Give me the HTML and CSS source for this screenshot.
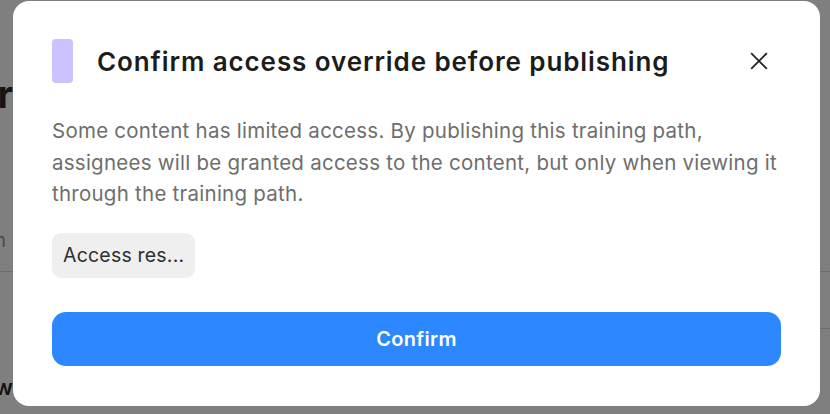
FILE: index.html
```html
<!DOCTYPE html>
<html lang="en">
  <head>
    <meta charset="UTF-8" />
    <meta name="viewport" content="width=device-width, initial-scale=1.0" />
    <title>Confirm access override</title>
    <link rel="stylesheet" href="styles.css">
  </head>
  <body>
    <!-- page behind the dialog -->
    <div class="page">
      <div class="page-row"><h1 class="page-title">Publisher</h1></div>
      <div class="page-row"><span class="page-tab">Permission</span></div>
      <div class="page-rule"></div>
      <div class="page-rule right"></div>
      <div class="page-row"><span class="page-foot">New</span></div>
    </div>

    <div class="overlay">
      <div class="modal">
        <div class="modal-head">
          <span class="modal-icon"></span>
          <h2 class="modal-title">Confirm access override before publishing</h2>
          <button class="close-btn" aria-label="Close">
            <svg width="20" height="20" viewBox="0 0 20 20">
              <path d="M2 2 L18 18 M18 2 L2 18" stroke="#222" stroke-width="2" fill="none" stroke-linecap="square" />
            </svg>
          </button>
        </div>

        <p class="modal-text">
          Some content has limited access. By publishing this training path,<br />
          assignees will be granted access to the content, but only when viewing it
          through the training path.
        </p>

        <div class="chips">
          <span class="chip">Access res...</span>
        </div>

        <button class="confirm-btn">Confirm</button>
      </div>
    </div>
  </body>
</html>
```

FILE: styles.css
```css
* {
  margin: 0;
  padding: 0;
  box-sizing: border-box;
}

body {
  font-family: Inter, "Noto Sans", Arial, sans-serif;
  background-color: #7f7f7f;
  width: 830px;
  height: 414px;
  overflow: hidden;
  position: relative;
}

/* Page behind (only its right end peeks out at the left) */
.page {
  width: 13px;
  height: 100%;
  display: flex;
  flex-direction: column;
}

.page-row {
  display: flex;
  justify-content: flex-end;
  white-space: nowrap;
}

.page-title {
  font-size: 38px;
  font-weight: 700;
  color: #141414;
  margin-top: 72px;
  line-height: 44px;
}

.page-tab {
  font-size: 19px;
  color: #4a4a4a;
  margin-top: 113px;
  margin-right: 7px;
}

.page-rule {
  width: 830px;
  height: 1px;
  background-color: #6c6c6c;
  margin-top: 19px;
  flex-shrink: 0;
}

.page-rule.right {
  margin-top: 56px;
  margin-left: 815px;
  width: 15px;
}

.page-foot {
  font-size: 22px;
  font-weight: 600;
  color: #141414;
  margin-top: 45px;
}

/* Dialog */
.overlay {
  position: absolute;
  top: 0;
  left: 0;
  right: 0;
  bottom: 0;
  padding: 1px 10px 8px 13px;
}

.modal {
  background-color: #fff;
  border-radius: 16px;
  height: 100%;
  padding: 38px 39px 0 39px;
}

.modal-head {
  display: flex;
  align-items: center;
}

.modal-icon {
  width: 21px;
  height: 44px;
  border-radius: 4px;
  background-color: #cbc2ff;
  flex-shrink: 0;
}

.modal-title {
  flex: 1;
  font-size: 26px;
  font-weight: 600;
  color: #1c1c1c;
  margin-left: 24px;
  letter-spacing: 0.9px;
}

.close-btn {
  background: none;
  border: none;
  width: 20px;
  height: 20px;
  margin-right: 12px;
  cursor: pointer;
}

.close-btn svg {
  display: block;
  width: 18px;
  height: 18px;
  margin: 1px;
}

.modal-text {
  margin-top: 32px;
  font-size: 20.5px;
  line-height: 31.5px;
  color: #6e6e6e;
  letter-spacing: 0.25px;
}

.chips {
  margin-top: 23px;
  display: flex;
}

.chip {
  background-color: #efefef;
  border-radius: 9px;
  padding: 0 11px;
  height: 45px;
  line-height: 45px;
  font-size: 19.5px;
  color: #2e2e2e;
  letter-spacing: 0.2px;
}

.confirm-btn {
  display: block;
  width: 100%;
  margin-top: 34px;
  height: 54px;
  border: none;
  border-radius: 14px;
  background-color: #2d87fe;
  color: #fff;
  font-family: Inter, "Noto Sans", Arial, sans-serif;
  font-size: 20px;
  font-weight: 600;
  letter-spacing: 0.3px;
  cursor: pointer;
}
```
